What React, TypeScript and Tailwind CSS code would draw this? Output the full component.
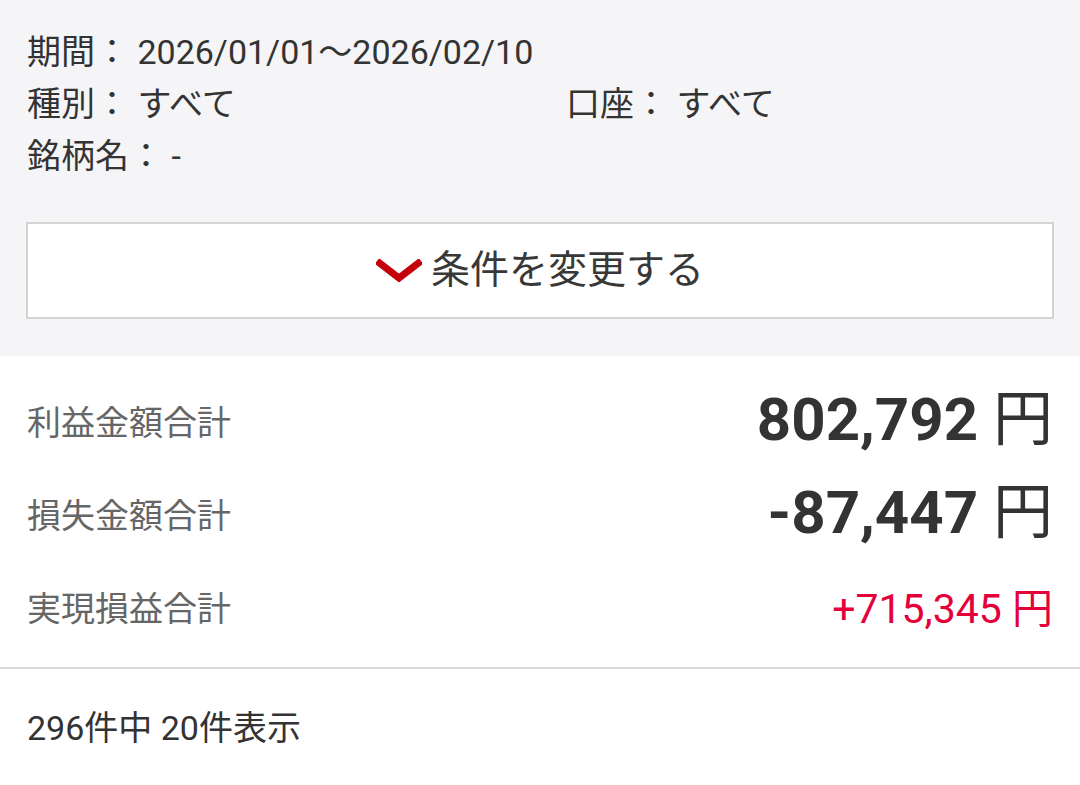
const font = "font-['Roboto','Noto_Sans_CJK_JP',sans-serif]";

function Chevron() {
  return (
    <svg width="46" height="24" viewBox="0 0 46 24" className="shrink-0">
      <polyline
        points="1,2 23,19 45,2"
        fill="none"
        stroke="#c4000b"
        strokeWidth="7"
        strokeLinejoin="miter"
      />
    </svg>
  );
}

function SummaryRow({
  label,
  value,
  big,
  red,
}: {
  label: string;
  value: string;
  big?: boolean;
  red?: boolean;
}) {
  return (
    <div className="flex h-[93px] items-center justify-between">
      <span className="text-[34px] text-[#666666]">{label}</span>
      {big ? (
        <span className="-mt-[8px] text-[60px] leading-none text-[#333333]">
          <span className="font-bold">{value}</span> 円
        </span>
      ) : (
        <span className={`text-[41px] leading-none ${red ? "text-[#e5003a]" : "text-[#333333]"}`}>
          {value} 円
        </span>
      )}
    </div>
  );
}

export default function App() {
  return (
    <div className={`${font} min-h-[785px] w-[1080px] bg-white text-[#333333]`}>
      <div className="bg-[#f5f5f7] pb-[37px] pt-[26px]">
        <div className="px-[27px] text-[34px] leading-[52px]">
          <div>期間： 2026/01/01～2026/02/10</div>
          <div className="flex">
            <div className="w-[539px]">種別： すべて</div>
            <div>口座： すべて</div>
          </div>
          <div>銘柄名： -</div>
        </div>
        <div className="mt-[40px] px-[26px]">
          <button className="flex h-[97px] w-full items-center justify-center gap-[9px] border-2 border-[#d4d4d4] bg-white">
            <Chevron />
            <span className="text-[39px] text-[#383838]">条件を変更する</span>
          </button>
        </div>
      </div>

      <div className="border-b-2 border-[#d8d8d8] px-[27px] pb-[11px] pt-[21px]">
        <SummaryRow label="利益金額合計" value="802,792" big />
        <SummaryRow label="損失金額合計" value="-87,447" big />
        <SummaryRow label="実現損益合計" value="+715,345" red />
      </div>

      <div className="px-[27px] pt-[34px] text-[34px] leading-[50px]">296件中 20件表示</div>
    </div>
  );
}
